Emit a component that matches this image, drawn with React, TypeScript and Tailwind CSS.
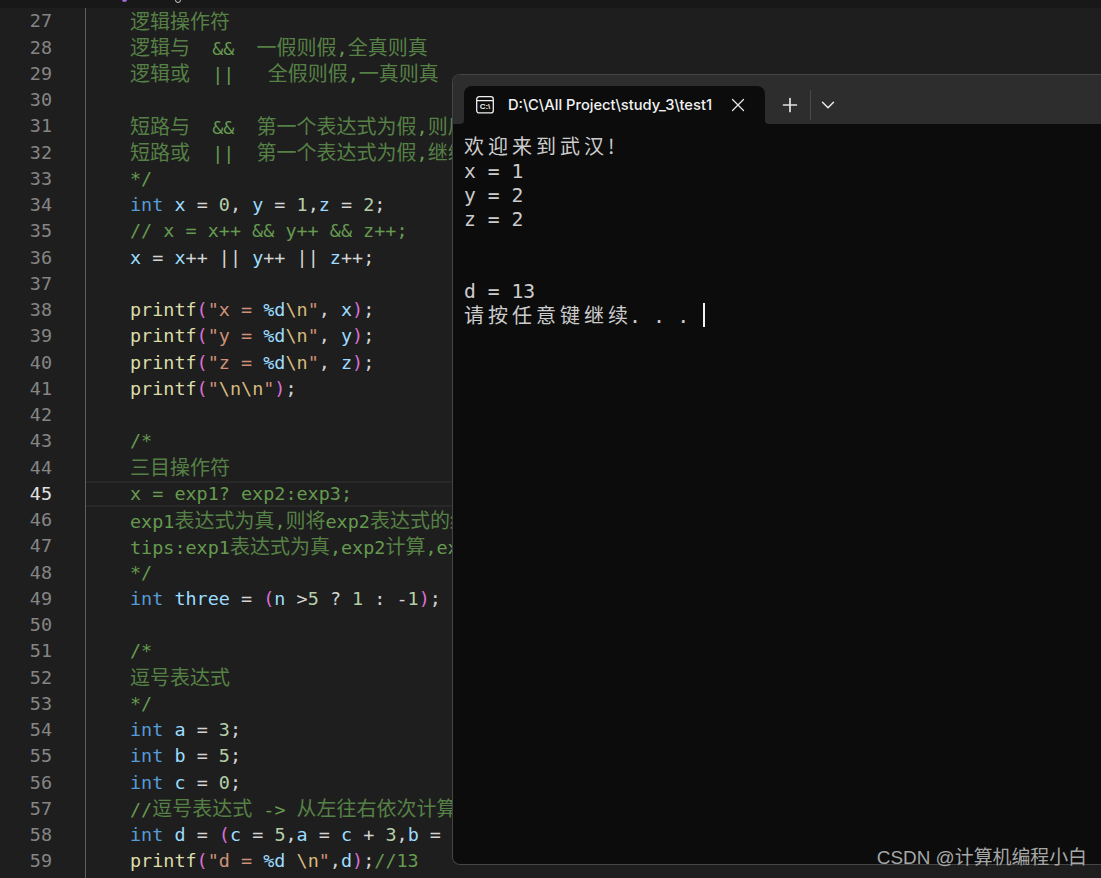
import { Fragment, type ReactNode } from "react";
import { X, Plus, ChevronDown } from "lucide-react";

const blue = "text-[#569cd6]";
const lvar = "text-[#9cdcfe]";
const num = "text-[#b5cea8]";
const fn = "text-[#dcdcaa]";
const str = "text-[#ce9178]";
const esc = "text-[#d7ba7d]";
const fmt = "text-[#9cdcfe]";
const pink = "text-[#da70d6]";
const cmt = "text-[#659a50]";
const plain = "text-[#d4d4d4]";

type Seg = [string, string];

function Text({ text }: { text: string }) {
  const parts = text.split(/([\u3000-\u9fff\uff00-\uffef]+)/);
  return (
    <>
      {parts.map((p, i) =>
        i % 2 === 1 ? (
          <span key={i} className="text-[20px] opacity-80 font-['Noto_Sans_CJK_SC',sans-serif]">
            {p}
          </span>
        ) : (
          <Fragment key={i}>{p}</Fragment>
        )
      )}
    </>
  );
}

const c = (t: string): Seg[] => [[t, cmt]];
const intDecl = (name: string, val: string): Seg[] => [
  ["int", blue],
  [" ", plain],
  [name, lvar],
  [" = ", plain],
  [val, num],
  [";", plain],
];
const pf = (v: string): Seg[] => [
  ["printf", fn],
  ["(", pink],
  ['"' + v + " = ", str],
  ["%d", fmt],
  ["\\n", esc],
  ['"', str],
  [", ", plain],
  [v, lvar],
  [")", pink],
  [";", plain],
];

const lines: Seg[][] = [
  c("逻辑操作符"),
  c("逻辑与  &&  一假则假,全真则真"),
  c("逻辑或  ||   全假则假,一真则真"),
  [],
  c("短路与  &&  第一个表达式为假,则后面不计算"),
  c("短路或  ||  第一个表达式为假,继续计算后面"),
  c("*/"),
  [
    ["int", blue],
    [" ", plain],
    ["x", lvar],
    [" = ", plain],
    ["0", num],
    [", ", plain],
    ["y", lvar],
    [" = ", plain],
    ["1", num],
    [",", plain],
    ["z", lvar],
    [" = ", plain],
    ["2", num],
    [";", plain],
  ],
  c("// x = x++ && y++ && z++;"),
  [
    ["x", lvar],
    [" = ", plain],
    ["x", lvar],
    ["++ || ", plain],
    ["y", lvar],
    ["++ || ", plain],
    ["z", lvar],
    ["++;", plain],
  ],
  [],
  pf("x"),
  pf("y"),
  pf("z"),
  [
    ["printf", fn],
    ["(", pink],
    ['"', str],
    ["\\n\\n", esc],
    ['"', str],
    [")", pink],
    [";", plain],
  ],
  [],
  c("/*"),
  c("三目操作符"),
  c("x = exp1? exp2:exp3;"),
  c("exp1表达式为真,则将exp2表达式的结果赋值给x"),
  c("tips:exp1表达式为真,exp2计算,exp3不计算"),
  c("*/"),
  [
    ["int", blue],
    [" ", plain],
    ["three", lvar],
    [" = ", plain],
    ["(", pink],
    ["n", lvar],
    [" >", plain],
    ["5", num],
    [" ? ", plain],
    ["1", num],
    [" : -", plain],
    ["1", num],
    [")", pink],
    [";", plain],
  ],
  [],
  c("/*"),
  c("逗号表达式"),
  c("*/"),
  intDecl("a", "3"),
  intDecl("b", "5"),
  intDecl("c", "0"),
  c("//逗号表达式 -> 从左往右依次计算"),
  [
    ["int", blue],
    [" ", plain],
    ["d", lvar],
    [" = ", plain],
    ["(", pink],
    ["c", lvar],
    [" = ", plain],
    ["5", num],
    [",", plain],
    ["a", lvar],
    [" = ", plain],
    ["c", lvar],
    [" + ", plain],
    ["3", num],
    [",", plain],
    ["b", lvar],
    [" = ", plain],
  ],
  [
    ["printf", fn],
    ["(", pink],
    ['"d = ', str],
    ["%d", fmt],
    [" ", str],
    ["\\n", esc],
    ['"', str],
    [",", plain],
    ["d", lvar],
    [")", pink],
    [";", plain],
    ["//13", cmt],
  ],
];

function CodeLine({ n, segs, hideNumber }: { n: number; segs: Seg[]; hideNumber?: boolean }) {
  const active = n === 45;
  return (
    <div className="flex h-[26.25px] items-center">
      <div
        className={
          "w-[52px] shrink-0 text-right " + (active ? "text-[#e0e0e0]" : "text-[#858585]")
        }
      >
        {hideNumber ? "" : n}
      </div>
      <div className="ml-[33px] h-full w-px shrink-0 bg-[#5f5f5f]" />
      <div
        className={
          "flex h-full min-w-0 flex-1 items-center whitespace-pre pl-[44px] " +
          (active ? "border-y-2 border-[#282828]" : "")
        }
      >
        {segs.map((s, i) => (
          <span key={i} className={s[1]}>
            <Text text={s[0]} />
          </span>
        ))}
      </div>
    </div>
  );
}

function TermLine({ children }: { children?: ReactNode }) {
  return <div className="h-[24px] whitespace-pre leading-[24px]">{children}</div>;
}

function TerminalIcon() {
  return (
    <svg width="18" height="18" viewBox="0 0 18 18" fill="none" className="shrink-0">
      <rect x="0.7" y="0.7" width="16.6" height="16.2" rx="2.5" stroke="#f0f0f0" strokeWidth="1.3" />
      <path d="M1 4.6h16" stroke="#f0f0f0" strokeWidth="1.3" />
      <text
        x="9"
        y="13.4"
        textAnchor="middle"
        fontSize="8"
        fontWeight="700"
        fontFamily="Liberation Sans, sans-serif"
        fill="#f0f0f0"
      >
        C:\
      </text>
    </svg>
  );
}

function Terminal() {
  return (
    <div className="absolute bottom-[13px] left-[452px] right-0 top-[74px] flex flex-col overflow-hidden rounded-l-[8px] border border-r-0 border-[#454545] bg-[#0c0c0c]">
      <div className="flex h-[49px] shrink-0">
        <div className="w-[11px] rounded-br-[4px] bg-[#2d2d2d]" />
        <div className="flex w-[301px] items-end bg-[#2d2d2d]">
          <div className="flex h-[38px] w-full items-center rounded-t-[8px] bg-[#0c0c0c] pl-[12px] font-['Inter',sans-serif] text-[14.7px] font-medium text-[#f2f2f2]">
            <TerminalIcon />
            <span className="ml-[14px] w-[219px] overflow-hidden whitespace-pre">
              D:\C\All Project\study_3\test1
            </span>
            <X size={22} strokeWidth={1.4} className="text-[#e6e6e6]" />
          </div>
        </div>
        <div className="flex flex-1 items-end rounded-bl-[4px] bg-[#2d2d2d]">
          <div className="flex h-[38px] items-center">
            <Plus size={22} strokeWidth={1.9} className="ml-[14px] text-[#e0e0e0]" />
            <div className="ml-[9px] h-[30px] w-px bg-[#4a4a4a]" />
            <ChevronDown size={22} strokeWidth={1.7} className="ml-[6px] text-[#e6e6e6]" />
          </div>
        </div>
      </div>
      <div className="pl-[11px] pt-[12px] font-['DejaVu_Sans_Mono',monospace] text-[19.7px] text-[#cccccc]">
        <TermLine>
          <span className="inline-block h-[24px] -translate-y-[2px] align-top font-['Noto_Sans_CJK_SC',sans-serif] text-[20px] leading-[24px] tracking-[4px]">
            欢迎来到武汉!
          </span>
        </TermLine>
        <TermLine>x = 1</TermLine>
        <TermLine>y = 2</TermLine>
        <TermLine>z = 2</TermLine>
        <TermLine />
        <TermLine />
        <TermLine>d = 13</TermLine>
        <TermLine>
          <span className="inline-block h-[24px] -translate-y-px align-top font-['Noto_Sans_CJK_SC',sans-serif] text-[20px] leading-[24px] tracking-[4px]">
            请按任意键继续
          </span>
          <span className="ml-[-3px] text-[20px]">. . .</span>
          <span className="ml-[14px] inline-block h-[24px] w-[1.5px] -translate-y-px bg-[#f2f2f2] align-top" />
        </TermLine>
      </div>
    </div>
  );
}

export default function App() {
  return (
    <div className="relative h-[878px] w-[1101px] overflow-hidden bg-[#1e1e1e] font-['DejaVu_Sans_Mono',monospace] text-[18.45px]">
      <div className="relative h-[8px] overflow-hidden bg-[#181818]">
        <div className="absolute left-[122px] top-[-3px] h-[5px] w-[5px] rounded-full bg-[#a66be0]" />
        <div className="absolute left-[175px] top-[-3px] h-[6px] w-[6px] rounded-full border border-[#c9c9c9]" />
      </div>
      {lines.map((segs, i) => (
        <CodeLine key={i} n={27 + i} segs={segs} />
      ))}
      <CodeLine n={60} segs={[]} hideNumber />
      <Terminal />
      <div className="absolute bottom-[5px] right-[14px] font-['Liberation_Sans','Noto_Sans_CJK_SC',sans-serif] text-[18.9px] leading-[30px] text-[#a6a6a6]">
        CSDN @计算机编程小白
      </div>
    </div>
  );
}
